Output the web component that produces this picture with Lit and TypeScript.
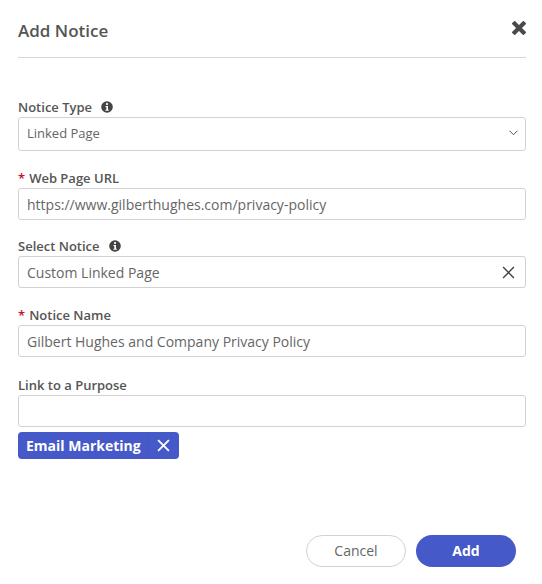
import { LitElement, html, css } from "lit";
import { customElement } from "lit/decorators.js";

const info = html`<svg class="info" viewBox="0 0 12 12" width="12" height="12"><circle cx="6" cy="6" r="5.8" fill="#444"/><rect x="5.1" y="2.1" width="1.9" height="1.8" fill="#fff"/><path d="M4.5 5h2.5v3.8h.8v1H4.4v-1h.9V6h-.8z" fill="#fff"/></svg>`;
const x = (s: number, w: number, c: string) => html`<svg width=${s} height=${s} viewBox="0 0 12 12" fill="none" stroke=${c} stroke-width=${w}><path d="M1 1l10 10M11 1L1 11"/></svg>`;

@customElement("app-root")
export class AppRoot extends LitElement {
  static styles = css`
    :host { display: block; width: 542px; height: 584px; box-sizing: border-box; padding: 0 16px 0 18px; background: #fff; font-family: "Open Sans", sans-serif; color: #555; font-size: 14px; }
    .head { height: 58px; box-sizing: border-box; border-bottom: 1px solid #d8d8d8; display: flex; justify-content: space-between; align-items: flex-start; }
    h1 { margin: 20px 0 0; font-size: 17px; font-weight: 600; line-height: 22px; color: #555; }
    .close { margin-top: 21px; display: flex; }
    .form { display: flex; flex-direction: column; padding-top: 39px; }
    label { display: flex; align-items: center; height: 20px; font-size: 13px; font-weight: 600; color: #555; }
    .req { color: #c8102e; margin-right: 4px; }
    .info { margin-left: 9px; }
    .field { height: 32px; box-sizing: border-box; border: 1px solid #d2d2d2; border-radius: 3px; padding: 0 8px; display: flex; align-items: center; justify-content: space-between; margin-bottom: 17px; font-size: 14px; color: #666; }
    .first { font-size: 13px; height: 34px; padding: 0 7px 2px 8px; }
    .url { margin-bottom: 16px; }
    .clear { margin-right: 2px; display: flex; }
    .purpose { margin-top: 1px; }
    .tag { align-self: flex-start; margin-top: -12px; height: 27px; box-sizing: border-box; background: #4659c8; color: #fff; font-weight: 700; font-size: 14px; border-radius: 4px; display: flex; align-items: stretch; }
    .tag-text { display: flex; align-items: center; padding: 0 7px 0 8px; border-right: 1px solid #4356c2; }
    .tag-x { display: flex; align-items: center; padding: 0 9px 0 8px; }
    .foot { display: flex; justify-content: flex-end; gap: 10px; margin-top: 76px; padding-right: 10px; }
    .btn { width: 100px; height: 32px; box-sizing: border-box; border-radius: 16px; display: flex; align-items: center; justify-content: center; font-size: 14px; padding-bottom: 2px; }
    .cancel { border: 1px solid #d2d2d2; color: #666; }
    .add { background: #4659c8; color: #fff; font-weight: 700; }
  `;
  render() {
    return html`
      <div class="head"><h1>Add Notice</h1><span class="close">${x(14, 3.6, "#4a4a4a")}</span></div>
      <div class="form">
        <label>Notice Type ${info}</label>
        <div class="field first">Linked Page <svg width="9" height="6" viewBox="0 0 9 6" fill="none" stroke="#555"><path d="M.5.7 4.500 4.700 8.500.7"/></svg></div>
        <label><span class="req">*</span>Web Page URL</label>
        <div class="field url">https://www.gilberthughes.com/privacy-policy</div>
        <label>Select Notice ${info}</label>
        <div class="field">Custom Linked Page <span class="clear">${x(13, 1.3, "#444")}</span></div>
        <label><span class="req">*</span>Notice Name</label>
        <div class="field">Gilbert Hughes and Company Privacy Policy</div>
        <label class="purpose">Link to a Purpose</label>
        <div class="field"></div>
        <div class="tag"><span class="tag-text">Email Marketing</span><span class="tag-x">${x(13, 1.7, "#fff")}</span></div>
        <div class="foot"><div class="btn cancel">Cancel</div><div class="btn add">Add</div></div>
      </div>`;
  }
}
